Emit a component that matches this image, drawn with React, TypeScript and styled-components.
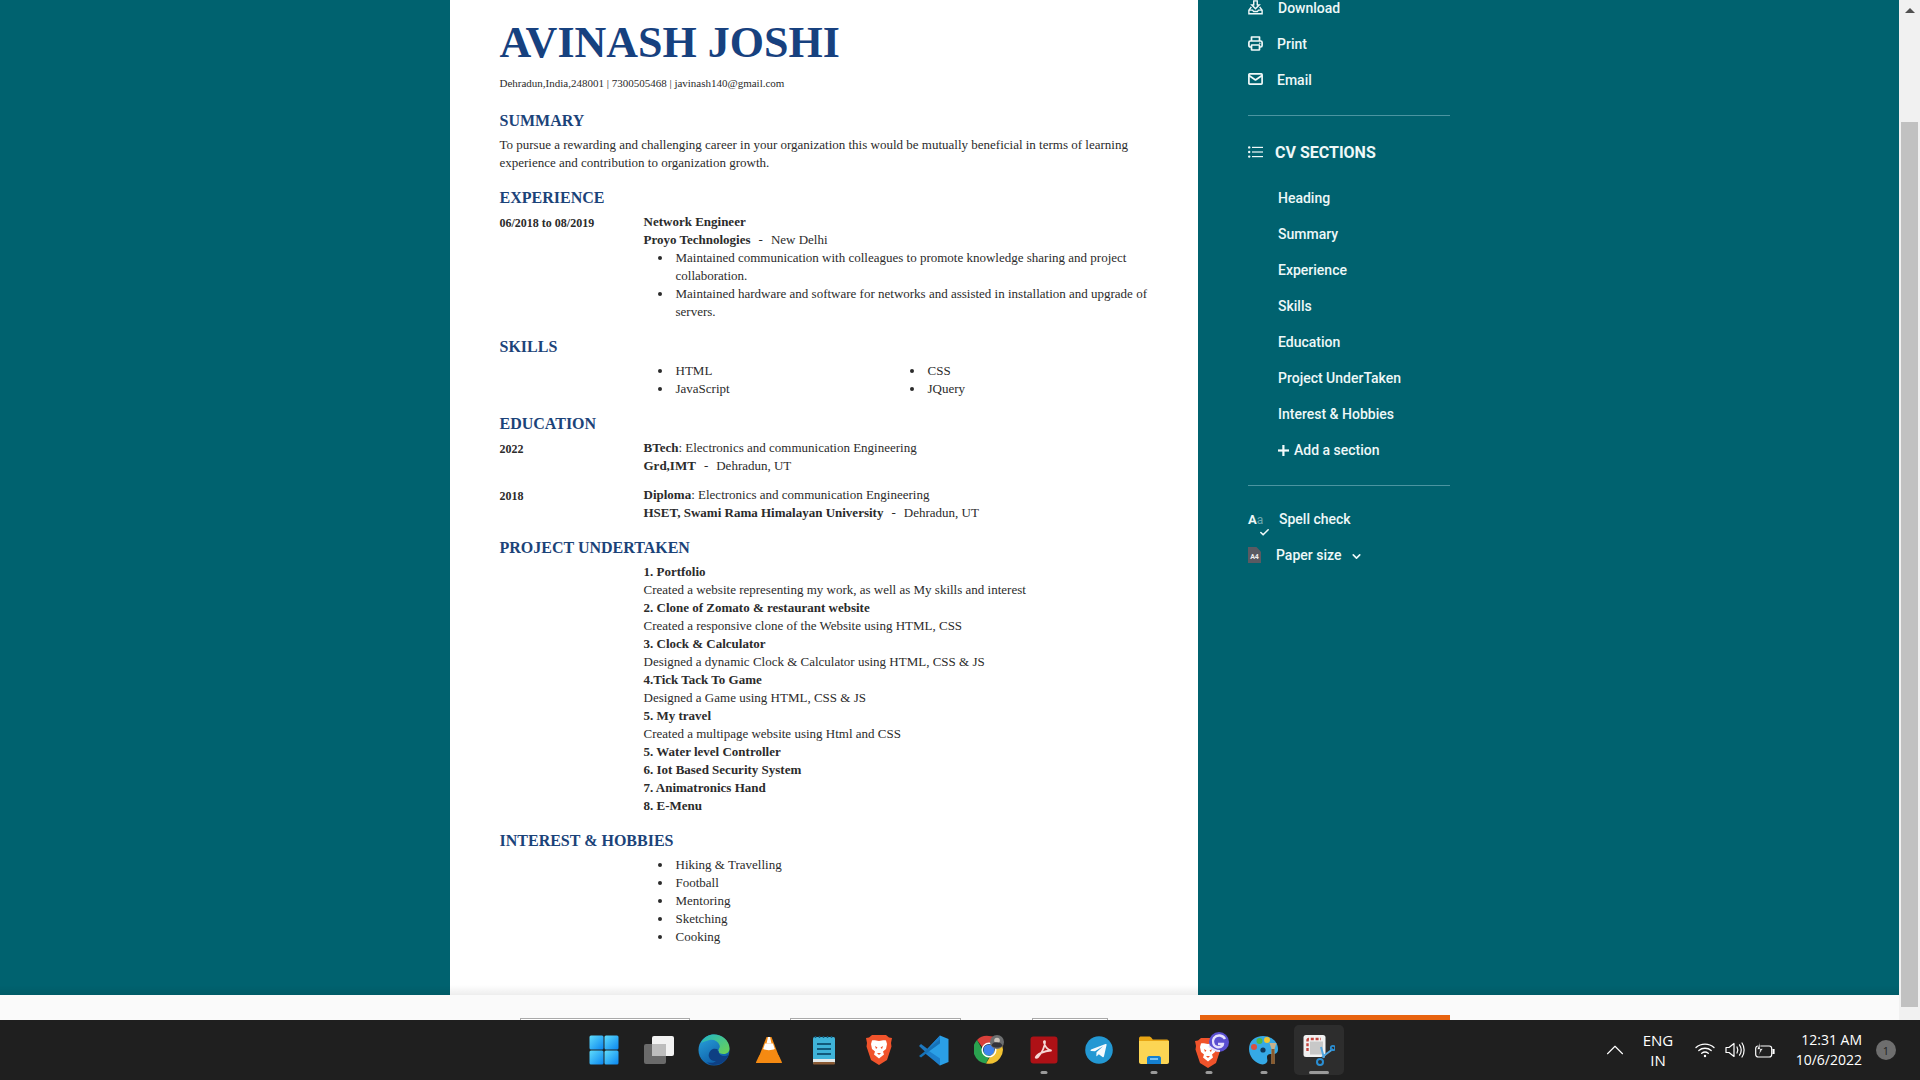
import styled, { createGlobalStyle } from "styled-components";
import { ChevronDown, ChevronUp, Check } from "lucide-react";
import type { ReactNode } from "react";

const GlobalStyle = createGlobalStyle`
  html, body {
    margin: 0;
    padding: 0;
    height: 100%;
    overflow: hidden;
  }
  body {
    font-family: "Liberation Serif", serif;
  }
`;

function DownloadIcon() {
  return (
    <svg width="17" height="17" viewBox="0 0 17 17" fill="none" stroke="#f1f9f9" strokeWidth="1.6">
      <path d="M6.5 1h4v4.500h2.200L8.500 9.800 4.300 5.500h2.200z" />
      <path d="M3.800 8 1 11.500V15.500h15v-4L13.200 8M1 11.500h4.200l1.200 1.600h4.200l1.200-1.600H16" />
    </svg>
  );
}

function PrinterIcon() {
  return (
    <svg width="15" height="15" viewBox="0 0 15 15" fill="none" stroke="#f1f9f9" strokeWidth="1.700" strokeLinejoin="round">
      <path d="M3.500 5V1h8v4" />
      <rect x="0.900" y="5" width="13.200" height="6" rx="1.500" />
      <rect x="3.500" y="9" width="8" height="5" rx="0.500" fill="#00626f" />
      <circle cx="11.800" cy="7.200" r="0.500" fill="#f1f9f9" strokeWidth="0.600" />
    </svg>
  );
}

function MailIcon() {
  return (
    <svg width="15" height="12" viewBox="0 0 15 12" fill="none" stroke="#f1f9f9" strokeWidth="1.700" strokeLinejoin="round">
      <rect x="0.900" y="0.900" width="13.200" height="10.200" rx="0.800" />
      <path d="M1 2.500 7.500 7 14 2.500" />
    </svg>
  );
}

function ListIcon() {
  return (
    <svg width="15" height="12" viewBox="0 0 15 12" fill="#f1f9f9">
      <circle cx="1.200" cy="1.400" r="1.200" />
      <circle cx="1.200" cy="6" r="1.200" />
      <circle cx="1.200" cy="10.600" r="1.200" />
      <rect x="4" y="0.800" width="11" height="1.200" />
      <rect x="4" y="5.400" width="11" height="1.200" />
      <rect x="4" y="10" width="11" height="1.200" />
    </svg>
  );
}

function PlusIcon() {
  return (
    <svg width="11" height="11" viewBox="0 0 11 11" fill="#f4fbfb">
      <rect x="4.300" y="0" width="2.200" height="11" />
      <rect x="0" y="4.400" width="11" height="2.200" />
    </svg>
  );
}

function StartIcon() {
  return (
    <svg width="30" height="30" viewBox="0 0 30 30">
      <defs>
        <linearGradient id="win" x1="0" y1="0" x2="1" y2="1">
          <stop offset="0" stopColor="#5fdcfb" />
          <stop offset="1" stopColor="#0a86f0" />
        </linearGradient>
      </defs>
      <rect x="0.500" y="0.500" width="14" height="14" rx="1.500" fill="url(#win)" />
      <rect x="15.500" y="0.500" width="14" height="14" rx="1.500" fill="url(#win)" />
      <rect x="0.500" y="15.500" width="14" height="14" rx="1.500" fill="url(#win)" />
      <rect x="15.500" y="15.500" width="14" height="14" rx="1.500" fill="url(#win)" />
    </svg>
  );
}

function TaskViewIcon() {
  return (
    <svg width="30" height="30" viewBox="0 0 30 30">
      <rect x="8" y="1" width="22" height="20" rx="2" fill="#f2f2f2" />
      <rect x="0" y="9" width="22" height="20" rx="2" fill="#6a6a6a" />
      <rect x="8" y="9" width="14" height="12" fill="#bdbdbd" />
    </svg>
  );
}

function EdgeIcon() {
  return (
    <svg width="32" height="32" viewBox="0 0 32 32">
      <defs>
        <linearGradient id="edgeBlue" x1="0" y1="0" x2="0.600" y2="1">
          <stop offset="0" stopColor="#2aa6de" />
          <stop offset="1" stopColor="#0c59a4" />
        </linearGradient>
        <linearGradient id="edgeGreen" x1="0" y1="0" x2="1" y2="1">
          <stop offset="0" stopColor="#1fb6c8" />
          <stop offset="1" stopColor="#6fd34f" />
        </linearGradient>
      </defs>
      <circle cx="16" cy="16" r="15.500" fill="url(#edgeBlue)" />
      <path d="M3 9C6 3 11 .5 16 .5c8 0 15.500 6 15.500 14 0 3-2 5.500-6 5.500-3 0-5-1-5-3 0-3 2-3 1-6-1.500-4-6-6-10-5C8 7 5 8 3 9z" fill="url(#edgeGreen)" />
      <path d="M20.500 17c0 3 3 5 6 5 1.500 0 3-.5 4-1-2 6-8 10-15 10-3 0-5-1-6.500-3 3 1.500 7 1 9-1-3 .5-6-1-7-4s1-7 4-8c2-.5 4 0 5.500 1-1 .5-1 1-1 1z" fill="#0e3f83" />
    </svg>
  );
}

function VlcIcon() {
  return (
    <svg width="26" height="28" viewBox="0 0 26 28">
      <path d="M10.500 1h5l8 21H2.500z" fill="#f58a12" />
      <path d="M9 7.500h8l1.800 5.500c-3 1.500-9 1.500-11.600 0z" fill="#fff" />
      <path d="M12 1h2l1.500 6.500h-5z" fill="#fff" />
      <path d="M3.500 19C1 24 0 26 0 27h26c0-1-1-3-3.500-8-2 3.500-17 3.500-19 0z" fill="#f58a12" />
    </svg>
  );
}

function NotepadIcon() {
  return (
    <svg width="24" height="30" viewBox="0 0 24 30">
      <rect x="1" y="2" width="22" height="27" rx="1.500" fill="#3fb3d8" />
      <rect x="1" y="24" width="22" height="3" fill="#e4e9ea" />
      <rect x="1" y="27" width="22" height="2.500" rx="1" fill="#8a5a34" />
      <path d="M5 9h14M5 14h14M5 19h14" stroke="#12597a" strokeWidth="1.800" />
      <path d="M3.500 1v2M7.500 1v2M11.500 1v2M15.500 1v2M19.500 1v2" stroke="#12597a" strokeWidth="1.500" />
    </svg>
  );
}

function BraveShape() {
  return (
    <>
      <path d="M6 0h14l3 2.500 3 .5-1 5 .5 3.500L21 25l-8 5-8-5L.5 11.500 1 8 0 3l3-.5z" fill="#f0532b" />
      <path d="M13 6c-3 0-4-1-7-.5L5 9l1 5 3 2.500-1 3 5 4 5-4-1-3 3-2.500 1-5-1-3.500C17 5 16 6 13 6z" fill="#fff" />
      <path d="M9 11l2.500 1.500L10 14zM17 11l-2.500 1.500L16 14z" fill="#f0532b" />
      <path d="M11 18h4l-2 2z" fill="#f0532b" />
    </>
  );
}

function BraveIcon() {
  return (
    <svg width="26" height="30" viewBox="0 0 26 30">
      <BraveShape />
    </svg>
  );
}

function CodeIcon() {
  return (
    <svg width="31" height="31" viewBox="0 0 31 31">
      <path d="M22 .5 30.500 4v23L22 30.500 7 16.500z" fill="#2a9fe6" />
      <path d="M22 8.500 11 16l11 7.500V30.500L6 17.500 22 .5z" fill="#1c7fcb" />
      <path d="M1 11l2-2 8 6-2.500 3z" fill="#1d78bf" />
      <path d="M1 21l2 1.500 19-14.500V4.500z" fill="#1672b6" />
    </svg>
  );
}

function ChromeIcon() {
  return (
    <svg width="30" height="30" viewBox="0 0 30 30">
      <path d="M15 1a14 14 0 0 1 12.100 7H15a7 7 0 0 0-6.500 4.500L3 5A14 14 0 0 1 15 1z" fill="#d8403a" />
      <path d="M3 5l6 10.500a7 7 0 0 0 7 4.400L12 28.400A14 14 0 0 1 3 5z" fill="#2aa24f" />
      <path d="M27.100 8a14 14 0 0 1-15.100 20.400l5.900-9.900A7 7 0 0 0 19.500 8z" fill="#f1c232" />
      <circle cx="15" cy="15" r="5.600" fill="#3f84ee" />
      <circle cx="15" cy="15" r="6.800" fill="none" stroke="#fff" strokeWidth="1.400" />
      <circle cx="23" cy="7" r="7" fill="#6d6f70" />
      <circle cx="23" cy="5.500" r="2.800" fill="#c9c3bb" />
      <path d="M17.500 10.500c1-2.800 3-3.300 5.500-3.300s4.500 1 5.500 3.300c-1.800 2.800-9.200 2.800-11 0z" fill="#34343a" />
    </svg>
  );
}

function AcrobatIcon() {
  return (
    <svg width="28" height="28" viewBox="0 0 28 28">
      <rect x="0.500" y="0.500" width="27" height="27" rx="3" fill="#ae1116" />
      <path
        d="M6 21c1-3 8-6 15-6.500-3-.5-6-4-7-8-.5-1.500 1-2 1-.5 0 4-3 11-7 15-1 1-3 1-2 0z"
        fill="none"
        stroke="#f6d8d6"
        strokeWidth="1.800"
        strokeLinejoin="round"
      />
    </svg>
  );
}

function TelegramIcon() {
  return (
    <svg width="28" height="28" viewBox="0 0 28 28">
      <circle cx="14" cy="14" r="13.800" fill="#2398d3" />
      <path d="M6 13.500 20.500 8c.8-.3 1.300.2 1 1.300L19 20.300c-.2.900-.8 1.100-1.500.7l-3.700-2.800-1.800 1.800c-.3.300-.7.300-.7-.2l.2-3.600 6.500-5.900-8 5L6.200 15c-1-.3-1-1 0-1.500z" fill="#f4fafd" />
    </svg>
  );
}

function FolderIcon() {
  return (
    <svg width="30" height="28" viewBox="0 0 30 28">
      <path d="M0 2.500C0 1 1 .5 2 .5h8c1 0 2 .5 3 2 .5 1 1 1 2 1h13c1 0 2 1 2 2V10H0z" fill="#e8a514" />
      <path d="M0 5h30v21c0 1-1 2-2 2H2c-1 0-2-1-2-2z" fill="#fcd554" />
      <path d="M8 22c0-1 1-2 2-2h10c1 0 2 1 2 2v6H8z" fill="#1580d0" />
      <rect x="11" y="22" width="8" height="2" fill="#7cc4f2" />
    </svg>
  );
}

function BraveBetaIcon() {
  return (
    <svg width="40" height="36" viewBox="-6 0 40 36">
      <g transform="translate(0 6)">
        <BraveShape />
      </g>
      <circle cx="24" cy="10" r="10" fill="#5a4fd0" />
      <path d="M30 7c-2-4-8-5-11-1-2 3-1 8 3 9 3 1 6-1 6-3h-5" fill="none" stroke="#e5e1fb" strokeWidth="2.400" />
      <path d="M14 14c3 3 7 5 11 5" stroke="#e5e1fb" strokeWidth="2" fill="none" />
    </svg>
  );
}

function PaintIcon() {
  return (
    <svg width="30" height="30" viewBox="0 0 30 30">
      <path d="M14 1c8 0 15 5 15 13 0 4-2 5-5 5s-6 0-6 3 1 3 0 5-4 3-7 2C5 27 0 21 0 14 0 6 6 1 14 1z" fill="#35a9e6" />
      <circle cx="5" cy="12" r="3" fill="#d9503f" />
      <circle cx="10.500" cy="6" r="3" fill="#4fb748" />
      <circle cx="18" cy="5" r="3" fill="#f2c530" />
      <circle cx="14" cy="15" r="2.600" fill="#10395c" />
      <path d="M20.500 8h7l-2 6v15h-3V14z" fill="#c8b18c" />
      <rect x="22.500" y="14" width="3" height="15" fill="#8a5a2c" />
    </svg>
  );
}

function SnipIcon() {
  return (
    <svg width="32" height="32" viewBox="0 0 32 32">
      <rect x="0.500" y="1" width="22" height="22" rx="2.500" fill="#f1f1f1" />
      <path d="M4.500 17V6.500A1.500 1.500 0 0 1 6 5h12" fill="none" stroke="#c2443d" strokeWidth="2.400" strokeDasharray="3 1.800" />
      <rect x="7" y="7.500" width="13" height="13" fill="#c8c8c8" />
      <path d="M18 13 21 24M30 15 19 23" stroke="#4ea5e0" strokeWidth="2" />
      <circle cx="30" cy="14" r="2.200" fill="none" stroke="#2a8fd4" strokeWidth="1.800" />
      <circle cx="17" cy="28" r="3" fill="none" stroke="#2a8fd4" strokeWidth="2" />
    </svg>
  );
}

function WifiIcon() {
  return (
    <svg width="20" height="16" viewBox="0 0 20 16" fill="none" stroke="#fff" strokeWidth="1.300" strokeLinecap="round">
      <path d="M1 5.500C6 1 14 1 19 5.500M3.800 8.500c3.400-3 9-3 12.400 0M6.700 11.300c2-1.600 4.600-1.600 6.600 0" />
      <circle cx="10" cy="14" r="1.200" fill="#fff" stroke="none" />
    </svg>
  );
}

function VolumeIcon() {
  return (
    <svg width="20" height="18" viewBox="0 0 20 18" fill="none" stroke="#fff" strokeWidth="1.200" strokeLinecap="round" strokeLinejoin="round">
      <path d="M1 6.500h3L9 2.500v13l-5-4H1z" />
      <path d="M12 6c1 1.800 1 4.200 0 6M14.500 3.800c2 3 2 7.400 0 10.400M17 2c2.800 4 2.800 10 0 14" />
    </svg>
  );
}

function BatteryIcon() {
  return (
    <svg width="20" height="17" viewBox="0 0 20 17" fill="none" stroke="#fff" strokeWidth="1.200">
      <rect x="0.700" y="4" width="16" height="11" rx="2.500" />
      <path d="M17.500 7.500h1.500v4h-1.500" fill="#fff" />
      <path d="M5 0 2 7.500h3l-1.500 6L8 6.500H5z" fill="#fff" stroke="#1f1f1f" strokeWidth="0.700" />
    </svg>
  );
}

interface DockItem {
  id: string;
  icon: ReactNode;
  running?: boolean;
  active?: boolean;
}

const dockItems: DockItem[] = [
  { id: "start", icon: <StartIcon /> },
  { id: "taskview", icon: <TaskViewIcon /> },
  { id: "edge", icon: <EdgeIcon /> },
  { id: "vlc", icon: <VlcIcon /> },
  { id: "notepad", icon: <NotepadIcon /> },
  { id: "brave", icon: <BraveIcon /> },
  { id: "code", icon: <CodeIcon /> },
  { id: "chrome", icon: <ChromeIcon /> },
  { id: "acrobat", icon: <AcrobatIcon />, running: true },
  { id: "telegram", icon: <TelegramIcon /> },
  { id: "files", icon: <FolderIcon />, running: true },
  { id: "bravebeta", icon: <BraveBetaIcon />, running: true },
  { id: "paint", icon: <PaintIcon />, running: true },
  { id: "snip", icon: <SnipIcon />, running: true, active: true },
];

const navItems = [
  "Heading",
  "Summary",
  "Experience",
  "Skills",
  "Education",
  "Project UnderTaken",
  "Interest & Hobbies",
];

const projects = [
  { title: "1. Portfolio", text: "Created a website representing my work, as well as My skills and interest" },
  { title: "2. Clone of Zomato & restaurant website", text: "Created a responsive clone of the Website using HTML, CSS" },
  { title: "3. Clock & Calculator", text: "Designed a dynamic Clock & Calculator using HTML, CSS & JS" },
  { title: "4.Tick Tack To Game", text: "Designed a Game using HTML, CSS & JS" },
  { title: "5. My travel", text: "Created a multipage website using Html and CSS" },
  { title: "5. Water level Controller" },
  { title: "6. Iot Based Security System" },
  { title: "7. Animatronics Hand" },
  { title: "8. E-Menu" },
];

const hobbies = ["Hiking & Travelling", "Football", "Mentoring", "Sketching", "Cooking"];

function App() {
  return (
    <>
      <GlobalStyle />
      <Screen>
        <Viewport>
          <PageArea>
            <Main>
              <Gutter />
              <Paper>
                <Name>AVINASH JOSHI</Name>
                <Contact>Dehradun,India,248001 | 7300505468 | javinash140@gmail.com</Contact>

                <Section>
                  <SectionTitle>SUMMARY</SectionTitle>
                  <Line>To pursue a rewarding and challenging career in your organization this would be mutually beneficial in terms of learning</Line>
                  <Line>experience and contribution to organization growth.</Line>
                </Section>

                <Section>
                  <SectionTitle>EXPERIENCE</SectionTitle>
                  <Row>
                    <DateCell>06/2018 to 08/2019</DateCell>
                    <div>
                      <Line><strong>Network Engineer</strong></Line>
                      <Line><strong>Proyo Technologies</strong><Sep>-</Sep>New Delhi</Line>
                      <Bullets>
                        <li>Maintained communication with colleagues to promote knowledge sharing and project collaboration.</li>
                        <li>Maintained hardware and software for networks and assisted in installation and upgrade of servers.</li>
                      </Bullets>
                    </div>
                  </Row>
                </Section>

                <Section>
                  <SectionTitle>SKILLS</SectionTitle>
                  <Row>
                    <DateCell />
                    <SkillColumns>
                      <Bullets>
                        <li>HTML</li>
                        <li>JavaScript</li>
                      </Bullets>
                      <Bullets>
                        <li>CSS</li>
                        <li>JQuery</li>
                      </Bullets>
                    </SkillColumns>
                  </Row>
                </Section>

                <Section>
                  <SectionTitle>EDUCATION</SectionTitle>
                  <Row>
                    <DateCell>2022</DateCell>
                    <div>
                      <Line><strong>BTech</strong>: Electronics and communication Engineering</Line>
                      <Line><strong>Grd,IMT</strong><Sep>-</Sep>Dehradun, UT</Line>
                    </div>
                  </Row>
                  <Row $spaced>
                    <DateCell>2018</DateCell>
                    <div>
                      <Line><strong>Diploma</strong>: Electronics and communication Engineering</Line>
                      <Line><strong>HSET, Swami Rama Himalayan University</strong><Sep>-</Sep>Dehradun, UT</Line>
                    </div>
                  </Row>
                </Section>

                <Section>
                  <SectionTitle>PROJECT UNDERTAKEN</SectionTitle>
                  <Row>
                    <DateCell />
                    <div>
                      {projects.map((project) => (
                        <div key={project.title}>
                          <Line><strong>{project.title}</strong></Line>
                          {project.text && <Line>{project.text}</Line>}
                        </div>
                      ))}
                    </div>
                  </Row>
                </Section>

                <Section>
                  <SectionTitle>INTEREST &amp; HOBBIES</SectionTitle>
                  <Row>
                    <DateCell />
                    <Bullets>
                      {hobbies.map((hobby) => (
                        <li key={hobby}>{hobby}</li>
                      ))}
                    </Bullets>
                  </Row>
                </Section>
              </Paper>

              <Sidebar>
                <SideRow $gap={15}>
                  <IconSlot><DownloadIcon /></IconSlot>
                  Download
                </SideRow>
                <SideRow $gap={14}>
                  <IconSlot><PrinterIcon /></IconSlot>
                  Print
                </SideRow>
                <SideRow $gap={14}>
                  <IconSlot><MailIcon /></IconSlot>
                  Email
                </SideRow>
                <Divider />
                <SideHeading>
                  <IconSlot><ListIcon /></IconSlot>
                  CV SECTIONS
                </SideHeading>
                <NavList>
                  {navItems.map((item) => (
                    <NavItem key={item}>{item}</NavItem>
                  ))}
                  <NavItem>
                    <AddSection>
                      <PlusIcon />
                      Add a section
                    </AddSection>
                  </NavItem>
                </NavList>
                <Divider $after={15} />
                <SideRow $gap={14}>
                  <SpellIcon>
                    A<SpellSmall>a</SpellSmall>
                    <SpellCheck><Check size={11} strokeWidth={3.5} /></SpellCheck>
                  </SpellIcon>
                  Spell check
                </SideRow>
                <SideRow $gap={10}>
                  <PaperIcon>A4</PaperIcon>
                  Paper size
                  <PaperChevron><ChevronDown size={13} strokeWidth={3} /></PaperChevron>
                </SideRow>
              </Sidebar>
            </Main>

            <FooterStrip>
              <FooterButton $width={170} $left={520} />
              <FooterButton $width={171} $left={100} />
              <FooterButton $width={76} $left={71} />
              <PrimaryButton />
            </FooterStrip>
          </PageArea>

          <Scrollbar>
            <ScrollArrow />
            <ScrollThumb />
          </Scrollbar>
        </Viewport>

        <Taskbar>
          <span />
          <Dock>
            {dockItems.map((item) => (
              <DockButton key={item.id}>
                <DockHighlight $active={item.active}>{item.icon}</DockHighlight>
                {item.running && <RunningDot $active={item.active} />}
              </DockButton>
            ))}
          </Dock>
          <Tray>
            <TrayIcon $width={30}><ChevronUp size={30} strokeWidth={0.9} /></TrayIcon>
            <Language>ENG<br />IN</Language>
            <TrayIcon $width={30}><WifiIcon /></TrayIcon>
            <TrayIcon $width={30}><VolumeIcon /></TrayIcon>
            <TrayIcon $width={30}><BatteryIcon /></TrayIcon>
            <Clock>12:31 AM<br />10/6/2022</Clock>
            <NotifyBadge>1</NotifyBadge>
          </Tray>
        </Taskbar>
      </Screen>
    </>
  );
}

const Screen = styled.div`
  display: flex;
  flex-direction: column;
  width: 1920px;
  height: 1080px;
  overflow: hidden;
`;

const Viewport = styled.div`
  display: flex;
  height: 1020px;
`;

const PageArea = styled.div`
  display: flex;
  flex-direction: column;
  width: 1899px;
`;

const Main = styled.div`
  display: flex;
  height: 995px;
  background: #00626f;
  overflow: hidden;
  position: relative;

  &::after {
    content: "";
    position: absolute;
    left: 0;
    right: 0;
    bottom: 0;
    height: 10px;
    background: linear-gradient(to bottom, rgba(255, 255, 255, 0), rgba(0, 0, 0, 0.07));
  }
`;

const Gutter = styled.div`
  width: 450px;
`;

const Paper = styled.div`
  width: 748px;
  height: 995px;
  box-sizing: border-box;
  padding: 18px 50px 0 49.5px;
  background: #fff;
  font-size: 13px;
  line-height: 18px;
  color: #2b2b2b;
`;

const Name = styled.h1`
  margin: 0 0 6px;
  font-size: 44px;
  line-height: 50px;
  font-weight: 700;
  color: #17417f;
`;

const Contact = styled.div`
  font-size: 11px;
  line-height: 18px;
  margin-bottom: 19px;
`;

const Section = styled.section`
  margin-bottom: 16px;
`;

const SectionTitle = styled.h2`
  margin: 0 0 5px;
  font-size: 16px;
  line-height: 20px;
  font-weight: 700;
  color: #1b4379;
`;

const Line = styled.div`
  white-space: nowrap;

  strong {
    font-weight: 700;
  }
`;

const Sep = styled.span`
  margin: 0 8px;
`;

const Row = styled.div<{ $spaced?: boolean }>`
  display: grid;
  grid-template-columns: 144px 1fr;
  margin-top: ${(p) => (p.$spaced ? "11px" : "0")};
`;

const DateCell = styled.div`
  font-size: 12px;
  font-weight: 700;
  padding-top: 1px;
`;

const Bullets = styled.ul`
  margin: 0;
  padding: 0 0 0 32px;
  list-style: none;

  li {
    position: relative;
  }

  li::before {
    content: "";
    position: absolute;
    left: -18px;
    top: 7px;
    width: 4px;
    height: 4px;
    border-radius: 50%;
    background: #2b2b2b;
  }
`;

const SkillColumns = styled.div`
  display: grid;
  grid-template-columns: 252px 1fr;
`;

const Sidebar = styled.aside`
  width: 202px;
  margin: -10px 0 0 50px;
  color: #eef8f8;
  font-family: Roboto, sans-serif;
  font-size: 14px;
  font-weight: 500;
`;

const SideRow = styled.div<{ $gap: number }>`
  display: flex;
  align-items: center;
  height: 36px;
  gap: ${(p) => p.$gap}px;
`;

const IconSlot = styled.span`
  display: flex;
  align-items: center;
  width: 15px;
  margin-top: -2px;
`;

const Divider = styled.hr<{ $after?: number }>`
  border: 0;
  height: 1px;
  margin: 17px 0 ${(p) => p.$after ?? 18}px;
  background: #4b95a1;
`;

const SideHeading = styled.div`
  display: flex;
  align-items: center;
  height: 36px;
  gap: 12px;
  margin-bottom: 10px;
  font-size: 16px;
  font-weight: 700;

  ${IconSlot} {
    margin-top: 0;
  }
`;

const NavList = styled.div`
  display: flex;
  flex-direction: column;
  padding-left: 30px;
`;

const NavItem = styled.div`
  display: flex;
  align-items: center;
  height: 36px;
`;

const AddSection = styled.span`
  display: flex;
  align-items: center;
  gap: 5px;
`;

const SpellIcon = styled.span`
  position: relative;
  width: 17px;
  font-size: 13px;
  font-weight: 700;
`;

const SpellSmall = styled.span`
  color: #6ba9b2;
  font-weight: 400;
  font-size: 12px;
`;

const SpellCheck = styled.span`
  position: absolute;
  left: 11px;
  top: 14px;
`;

const PaperIcon = styled.span`
  display: flex;
  align-items: flex-end;
  justify-content: center;
  box-sizing: border-box;
  width: 13px;
  height: 16px;
  padding-bottom: 2px;
  margin-right: 5px;
  background: #5a5a62;
  font-size: 7px;
  line-height: 8px;
  font-weight: 700;
  color: #eee;
  clip-path: polygon(0 0, 65% 0, 100% 30%, 100% 100%, 0 100%);
`;

const PaperChevron = styled.span`
  display: flex;
  margin: 2px 0 0 -1px;
`;

const FooterStrip = styled.div`
  display: flex;
  align-items: flex-end;
  height: 25px;
  background: #fafafa;
`;

const FooterButton = styled.div<{ $width: number; $left: number }>`
  width: ${(p) => p.$width}px;
  height: 2px;
  margin-left: ${(p) => p.$left}px;
  box-sizing: border-box;
  border: 1px solid #a9a9a9;
  border-bottom: 0;
  background: #fff;
`;

const PrimaryButton = styled.div`
  width: 250px;
  height: 5px;
  margin-left: 92px;
  background: #e8630f;
`;

const Scrollbar = styled.div`
  position: relative;
  width: 21px;
  padding-top: 8px;
  box-sizing: border-box;
  background: #f1f1f1;
`;

const ScrollArrow = styled.div`
  width: 0;
  height: 0;
  margin: 0 auto;
  border-left: 5px solid transparent;
  border-right: 5px solid transparent;
  border-bottom: 5px solid #505050;
`;

const ScrollThumb = styled.div`
  width: 17px;
  height: 885px;
  margin: 109px auto 0;
  background: #c1c1c1;
`;

const Taskbar = styled.footer`
  display: grid;
  grid-template-columns: 1fr auto 1fr;
  align-items: center;
  height: 60px;
  background: #1f1f1f;
  color: #fff;
  font-family: "Open Sans", sans-serif;
`;

const Dock = styled.div`
  display: flex;
  padding-left: 2px;
`;

const DockButton = styled.div`
  position: relative;
  display: flex;
  align-items: center;
  justify-content: center;
  width: 55px;
  height: 60px;
`;

const DockHighlight = styled.div<{ $active?: boolean }>`
  display: flex;
  align-items: center;
  justify-content: center;
  width: 50px;
  height: 50px;
  border-radius: 5px;
  background: ${(p) => (p.$active ? "#2d2d2d" : "transparent")};
`;

const RunningDot = styled.span<{ $active?: boolean }>`
  position: absolute;
  bottom: 6px;
  left: 50%;
  transform: translateX(-50%);
  width: ${(p) => (p.$active ? "20px" : "7px")};
  height: 3px;
  border-radius: 2px;
  background: #9a9a9a;
`;

const Tray = styled.div`
  display: flex;
  align-items: center;
  justify-content: flex-end;
  padding-right: 24px;
`;

const TrayIcon = styled.span<{ $width: number }>`
  display: flex;
  align-items: center;
  justify-content: center;
  width: ${(p) => p.$width}px;
`;

const Language = styled.div`
  width: 46px;
  margin: 0 9px 0 5px;
  text-align: center;
  font-size: 15px;
  line-height: 20px;
`;

const Clock = styled.div`
  width: 82px;
  text-align: right;
  font-size: 14px;
  line-height: 20px;
  white-space: nowrap;
`;

const NotifyBadge = styled.span`
  display: flex;
  align-items: center;
  justify-content: center;
  width: 20px;
  height: 20px;
  margin-left: 14px;
  border-radius: 50%;
  background: #6e6e6e;
  color: #1f1f1f;
  font-size: 11px;
`;

export default App;
